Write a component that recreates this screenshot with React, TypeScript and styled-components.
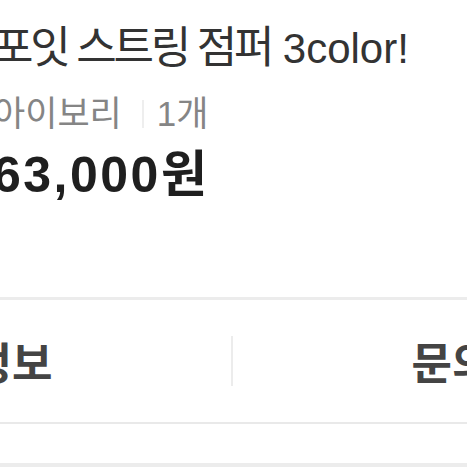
import React from "react";
import styled, { createGlobalStyle } from "styled-components";

const GlobalStyle = createGlobalStyle`
  html, body {
    margin: 0;
    padding: 0;
    background: #ffffff;
  }
  body {
    width: 467px;
    height: 467px;
    overflow: hidden;
    font-family: "Liberation Sans", "Noto Sans CJK KR", sans-serif;
  }
`;

// the shot is a crop of a wider page, so the page runs past both edges
const Page = styled.div`
  width: 1040px;
  margin-left: -288px;
`;

const Info = styled.section`
  display: flex;
  flex-direction: column;
  padding: 22px 0 0 281px;
  height: 300px;
  box-sizing: border-box;
  border-bottom: 3px solid #ececec;
`;

const Title = styled.h1`
  margin: 0;
  font-size: 42px;
  font-weight: 400;
  line-height: 52px;
  color: #333333;
  white-space: nowrap;
`;

const Ko = styled.span<{ $size: number; $tight: number }>`
  font-size: ${(p) => p.$size}px;
  letter-spacing: ${(p) => p.$tight}px;
`;

const Option = styled.div`
  display: flex;
  align-items: center;
  margin-top: 18px;
  font-size: 35px;
  line-height: 42px;
  color: #858585;
`;

const Bar = styled.span`
  width: 2px;
  height: 28px;
  margin: 0 13px 0 20px;
  background: #eeeeee;
`;

const Price = styled.div`
  margin-top: 15px;
  font-size: 50px;
  font-weight: 700;
  line-height: 50px;
  color: #1f1f1f;
  letter-spacing: 2.5px;
`;

const Tabs = styled.nav`
  display: grid;
  grid-template-columns: 1fr 2px 1fr;
  align-items: center;
  height: 122px;
  border-bottom: 2px solid #e9e9e9;
`;

const Tab = styled.div`
  text-align: center;
  font-size: 44px;
  font-weight: 700;
  color: #444444;
`;

const Divider = styled.div`
  height: 50px;
  background: #ececec;
`;

const Gap = styled.div`
  height: 39px;
  border-bottom: 4px solid #ececec;
`;

export default function App() {
  return (
    <>
      <GlobalStyle />
      <Page>
        <Info>
          <Title>
            <Ko $size={44} $tight={-3.3}>
              포잇 스트링 점퍼
            </Ko>{" "}
            3color!
          </Title>
          <Option>
            <span>아이보리</span>
            <Bar />
            <span>1개</span>
          </Option>
          <Price>63,000원</Price>
        </Info>
        <Tabs>
          <Tab>상품정보</Tab>
          <Divider />
          <Tab>문의하기</Tab>
        </Tabs>
        <Gap />
      </Page>
    </>
  );
}
